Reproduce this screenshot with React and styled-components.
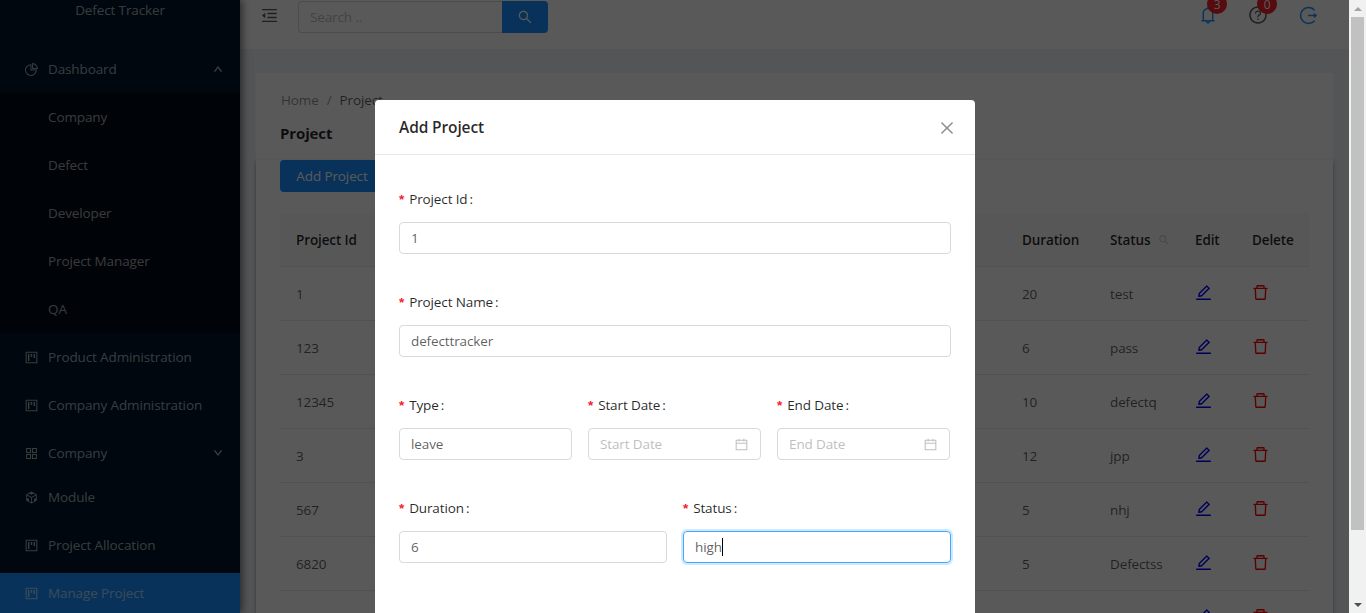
import React from 'react';
import styled, { createGlobalStyle } from 'styled-components';
import {
  AiOutlineAppstore,
  AiOutlineBell,
  AiOutlineCalendar,
  AiOutlineClose,
  AiOutlineCodeSandbox,
  AiOutlineDelete,
  AiOutlineDown,
  AiOutlineEdit,
  AiOutlineMenuFold,
  AiOutlinePieChart,
  AiOutlineProject,
  AiOutlineQuestionCircle,
  AiOutlineSearch,
  AiOutlineUp,
} from 'react-icons/ai';

const GlobalStyle = createGlobalStyle`
  html, body {
    margin: 0;
    height: 100%;
    overflow: hidden;
  }
  body {
    font-family: "Open Sans", "Noto Sans", "Liberation Sans", sans-serif;
    font-size: 13.5px;
    letter-spacing: -0.12px;
    color: rgba(0, 0, 0, 0.65);
  }
  * {
    box-sizing: border-box;
  }
`;

const Screen = styled.div`
  display: flex;
  height: 613px;
  width: 1366px;
  overflow: hidden;
`;

const Viewport = styled.div`
  position: relative;
  flex: 1;
  display: flex;
  background: #f0f2f5;
  overflow: hidden;
`;

/* the window's own scrollbar */
const ScrollTrack = styled.div`
  width: 17px;
  display: flex;
  flex-direction: column;
  align-items: center;
  background: #f1f1f1;
`;

const ScrollArrow = styled.div`
  height: 17px;
  width: 100%;
  display: flex;
  align-items: center;
  justify-content: center;

  &::before {
    content: '';
    border-left: 4px solid transparent;
    border-right: 4px solid transparent;
    ${({ $down }) => ($down ? 'border-top: 4px solid #505050;' : 'border-bottom: 4px solid #a3a3a3;')}
  }
`;

const ScrollThumb = styled.div`
  width: 13px;
  height: 513px;
  background: #c1c1c1;
`;

const ScrollRest = styled.div`
  flex: 1;
`;

const Sidebar = styled.aside`
  position: relative;
  z-index: 1;
  width: 240px;
  flex-shrink: 0;
  background: #001529;
  color: rgba(255, 255, 255, 0.65);
  box-shadow: 2px 0 8px rgba(0, 0, 0, 0.55);
`;

const Logo = styled.div`
  height: 45px;
  padding-top: 1px;
  text-align: center;
  line-height: 19px;
`;

const MenuRow = styled.div`
  display: flex;
  align-items: center;
  height: ${({ $tall }) => ($tall ? 48 : 40)}px;
  margin-top: ${({ $gap }) => $gap || 0}px;
  padding: 0 17px 0 24px;
  background: ${({ $active }) => ($active ? '#1890ff' : 'transparent')};

  > svg {
    font-size: 15px;
    margin-right: 9px;
    flex-shrink: 0;
  }
`;

const MenuLabel = styled.span`
  flex: 1;
`;

const Chevron = styled.span`
  display: flex;
  font-size: 10px;

  svg {
    stroke: currentColor;
    stroke-width: 60;
  }
`;

const SubMenu = styled.div`
  background: #000c17;
`;

const SubItem = styled.div`
  height: 48px;
  line-height: 48px;
  padding-left: 48px;
`;

const Main = styled.div`
  flex: 1;
  min-width: 0;
  display: flex;
  flex-direction: column;
`;

const TopBar = styled.header`
  height: 49px;
  flex-shrink: 0;
  display: flex;
  padding: 1px 16px 0 20px;
  background: #fff;
`;

const MenuToggle = styled.div`
  display: flex;
  height: 28px;
  align-items: center;
  width: 38px;
  font-size: 19px;
  color: rgba(0, 0, 0, 0.65);
`;

const SearchBox = styled.div`
  display: flex;
  height: 32px;
  width: 250px;
`;

const SearchInput = styled.div`
  flex: 1;
  line-height: 30px;
  padding-left: 11px;
  border: 1px solid #d9d9d9;
  border-right: 0;
  border-radius: 4px 0 0 4px;
  color: #bfbfbf;
`;

const SearchButton = styled.div`
  width: 46px;
  display: flex;
  align-items: center;
  justify-content: center;
  background: #1890ff;
  color: #fff;
  font-size: 16px;
  border-radius: 0 4px 4px 0;
`;

const TopActions = styled.div`
  margin-left: auto;
  display: flex;
`;

const TopAction = styled.div`
  position: relative;
  width: 50px;
  height: 28px;
  display: flex;
  align-items: center;
  justify-content: center;
  font-size: 20px;
  color: ${({ $color }) => $color};
`;

const Badge = styled.span`
  position: absolute;
  top: -7px;
  left: 24px;
  width: 20px;
  height: 20px;
  border-radius: 50%;
  background: #f5222d;
  color: #fff;
  font-size: 12px;
  line-height: 22px;
  text-align: center;
`;

const Panel = styled.section`
  flex: 1;
  margin: 24px 16px 0;
  background: #fff;
`;

const PanelHead = styled.div`
  height: 87px;
  padding: 17px 24px 0;
`;

const Breadcrumb = styled.div`
  display: flex;
  gap: 8px;
  height: 20px;
  line-height: 20px;
  padding-left: 1px;
  color: rgba(0, 0, 0, 0.45);
`;

const CrumbCurrent = styled.span`
  color: rgba(0, 0, 0, 0.65);
`;

const PageTitle = styled.h1`
  margin: 13px 0 0;
  font-size: 15px;
  line-height: 20px;
  font-weight: 700;
  color: rgba(0, 0, 0, 0.85);
`;

const TableCard = styled.div`
  height: 500px;
  padding: 0 24px;
  box-shadow: 0 2px 4px rgba(0, 0, 0, 0.35);
`;

const AddButton = styled.div`
  width: 104px;
  height: 32px;
  line-height: 32px;
  text-align: center;
  background: #1890ff;
  color: #fff;
  border-radius: 4px;
`;

const ProjectTable = styled.div`
  margin-top: 21px;
`;

const TableRow = styled.div`
  display: grid;
  grid-template-columns: 726px 88px 85px 57px 73px;
  height: 54px;
  align-items: center;
  border-bottom: 1px solid #e8e8e8;
  background: ${({ $head }) => ($head ? '#fafafa' : 'transparent')};
  color: ${({ $head }) => ($head ? 'rgba(0, 0, 0, 0.85)' : 'rgba(0, 0, 0, 0.65)')};
  font-weight: ${({ $head }) => ($head ? 600 : 400)};
`;

const Cell = styled.div`
  display: flex;
  align-items: center;
  padding-left: 16px;
`;

const HeadSearch = styled.span`
  display: flex;
  margin-left: 8px;
  font-size: 12px;
  color: #bfbfbf;
`;

const ActionIcon = styled.span`
  display: flex;
  margin: -3px 0 0 ${({ $shift }) => $shift}px;
  font-size: 19px;
  color: ${({ $color }) => $color};
`;

const Mask = styled.div`
  position: absolute;
  inset: 0;
  z-index: 10;
  background: rgba(0, 0, 0, 0.65);
`;

const Modal = styled.div`
  position: absolute;
  z-index: 20;
  top: 100px;
  left: 375px;
  width: 600px;
  height: 600px;
  background: #fff;
  border-radius: 4px;
`;

const ModalHeader = styled.div`
  display: flex;
  align-items: center;
  justify-content: space-between;
  height: 55px;
  padding: 0 19px 0 24px;
  border-bottom: 1px solid #e8e8e8;
`;

const ModalTitle = styled.div`
  font-size: 15.5px;
  font-weight: 600;
  color: rgba(0, 0, 0, 0.85);
`;

const CloseIcon = styled.span`
  display: flex;
  margin-top: 1px;
  font-size: 18px;
  color: rgba(0, 0, 0, 0.45);
`;

const ModalBody = styled.div`
  padding: 24px;
`;

const FormRow = styled.div`
  display: grid;
  grid-template-columns: ${({ $cols }) => $cols};
  gap: 16px;
  margin-bottom: 28px;
`;

const Label = styled.label`
  display: block;
  height: 40px;
  line-height: 40px;
  margin-bottom: 3px;
  color: rgba(0, 0, 0, 0.85);

  &::before {
    content: '*';
    margin-right: 5px;
    color: #f5222d;
    font-family: "Liberation Sans", sans-serif;
    font-weight: 700;
  }
  &::after {
    content: ':';
    margin-left: 2px;
    margin-right: 8px;
  }
`;

const Field = styled.div`
  display: flex;
  align-items: center;
  height: 32px;
  padding: 0 11px;
  border: 1px solid ${({ $focused }) => ($focused ? '#40a9ff' : '#d9d9d9')};
  border-radius: 4px;
  box-shadow: ${({ $focused }) => ($focused ? '0 0 0 2px rgba(24, 144, 255, 0.2)' : 'none')};
  color: rgba(0, 0, 0, 0.65);
`;

const Placeholder = styled.span`
  flex: 1;
  color: #bfbfbf;
`;

const DateIcon = styled.span`
  display: flex;
  font-size: 15px;
  color: rgba(0, 0, 0, 0.25);
`;

const Caret = styled.span`
  width: 1px;
  height: 18px;
  background: #000;
`;

const topMenu = [
  { label: 'Product Administration', icon: AiOutlineProject, gap: 4 },
  { label: 'Company Administration', icon: AiOutlineProject, gap: 8 },
  { label: 'Company', icon: AiOutlineAppstore, gap: 8, chevron: true },
  { label: 'Module', icon: AiOutlineCodeSandbox, gap: 4 },
  { label: 'Project Allocation', icon: AiOutlineProject, gap: 8 },
  { label: 'Manage Project', icon: AiOutlineProject, gap: 8, active: true },
];

const dashboardItems = ['Company', 'Defect', 'Developer', 'Project Manager', 'QA'];

const projects = [
  { id: '1', duration: '20', status: 'test' },
  { id: '123', duration: '6', status: 'pass' },
  { id: '12345', duration: '10', status: 'defectq' },
  { id: '3', duration: '12', status: 'jpp' },
  { id: '567', duration: '5', status: 'nhj' },
  { id: '6820', duration: '5', status: 'Defectss' },
  { id: '', duration: '', status: '' },
];

const LogoutIcon = () => (
  <svg width="19" height="19" viewBox="0 0 19 19" fill="none" stroke="currentColor" strokeWidth="1.5">
    <path d="M15.6 4.2A8 8 0 1 0 15.6 14.8" />
    <path d="M9 9.5H17" />
    <path d="M15 7.4L18 9.5L15 11.6Z" fill="currentColor" strokeWidth="0.6" />
  </svg>
);

const FormField = ({ label, value, placeholder, focused }) => (
  <div>
    <Label>{label}</Label>
    <Field $focused={focused}>
      {value}
      {focused && <Caret />}
      {placeholder && <Placeholder>{placeholder}</Placeholder>}
      {placeholder && (
        <DateIcon>
          <AiOutlineCalendar />
        </DateIcon>
      )}
    </Field>
  </div>
);

const App = () => (
  <Screen>
    <GlobalStyle />
    <Viewport>
      <Sidebar>
        <Logo>Defect Tracker</Logo>
        <MenuRow $tall>
          <AiOutlinePieChart />
          <MenuLabel>Dashboard</MenuLabel>
          <Chevron>
            <AiOutlineUp />
          </Chevron>
        </MenuRow>
        <SubMenu>
          {dashboardItems.map((item) => (
            <SubItem key={item}>{item}</SubItem>
          ))}
        </SubMenu>
        {topMenu.map(({ label, icon: Icon, gap, chevron, active }) => (
          <MenuRow key={label} $gap={gap} $active={active}>
            <Icon />
            <MenuLabel>{label}</MenuLabel>
            {chevron && (
              <Chevron>
                <AiOutlineDown />
              </Chevron>
            )}
          </MenuRow>
        ))}
      </Sidebar>

      <Main>
        <TopBar>
          <MenuToggle>
            <AiOutlineMenuFold />
          </MenuToggle>
          <SearchBox>
            <SearchInput>Search ..</SearchInput>
            <SearchButton>
              <AiOutlineSearch />
            </SearchButton>
          </SearchBox>
          <TopActions>
            <TopAction $color="#1890ff">
              <AiOutlineBell />
              <Badge>3</Badge>
            </TopAction>
            <TopAction $color="rgba(0, 0, 0, 0.65)">
              <AiOutlineQuestionCircle />
              <Badge>0</Badge>
            </TopAction>
            <TopAction $color="#1890ff">
              <LogoutIcon />
            </TopAction>
          </TopActions>
        </TopBar>

        <Panel>
          <PanelHead>
            <Breadcrumb>
              <span>Home</span>
              <span>/</span>
              <CrumbCurrent>Project</CrumbCurrent>
            </Breadcrumb>
            <PageTitle>Project</PageTitle>
          </PanelHead>
          <TableCard>
            <AddButton>Add Project</AddButton>
            <ProjectTable>
              <TableRow $head>
                <Cell>Project Id</Cell>
                <Cell>Duration</Cell>
                <Cell>
                  Status
                  <HeadSearch>
                    <AiOutlineSearch />
                  </HeadSearch>
                </Cell>
                <Cell>Edit</Cell>
                <Cell>Delete</Cell>
              </TableRow>
              {projects.map((project, i) => (
                <TableRow key={i}>
                  <Cell>{project.id}</Cell>
                  <Cell>{project.duration}</Cell>
                  <Cell>{project.status}</Cell>
                  <Cell>
                    <ActionIcon $color="#0000ff" $shift={-1}>
                      <AiOutlineEdit />
                    </ActionIcon>
                  </Cell>
                  <Cell>
                    <ActionIcon $color="#ff0000" $shift={-1}>
                      <AiOutlineDelete />
                    </ActionIcon>
                  </Cell>
                </TableRow>
              ))}
            </ProjectTable>
          </TableCard>
        </Panel>
      </Main>

      <Mask />

      <Modal>
        <ModalHeader>
          <ModalTitle>Add Project</ModalTitle>
          <CloseIcon>
            <AiOutlineClose />
          </CloseIcon>
        </ModalHeader>
        <ModalBody>
          <FormRow $cols="1fr">
            <FormField label="Project Id" value="1" />
          </FormRow>
          <FormRow $cols="1fr">
            <FormField label="Project Name" value="defecttracker" />
          </FormRow>
          <FormRow $cols="repeat(3, 173px)">
            <FormField label="Type" value="leave" />
            <FormField label="Start Date" placeholder="Start Date" />
            <FormField label="End Date" placeholder="End Date" />
          </FormRow>
          <FormRow $cols="1fr 1fr">
            <FormField label="Duration" value="6" />
            <FormField label="Status" value="high" focused />
          </FormRow>
        </ModalBody>
      </Modal>
    </Viewport>

    <ScrollTrack>
      <ScrollArrow />
      <ScrollThumb />
      <ScrollRest />
      <ScrollArrow $down />
    </ScrollTrack>
  </Screen>
);

export default App;
